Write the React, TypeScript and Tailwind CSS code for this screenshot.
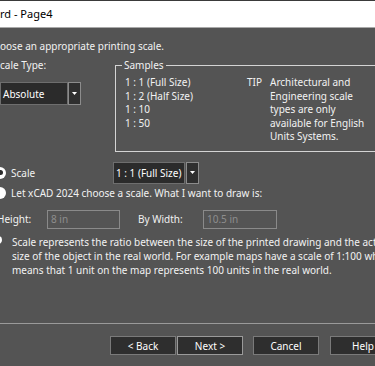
import React from "react";

const Dropdown: React.FC<{ value: string; boxClass: string; gapClass: string }> = ({ value, boxClass, gapClass }) => (
  <div className="flex shrink-0 items-stretch">
    <div className={`${boxClass} flex items-center overflow-hidden whitespace-nowrap border border-[#6e6e6e] bg-[#2b2b2b] pl-[2px] text-white`}>
      {value}
    </div>
    <div className={`${gapClass} flex w-[13px] items-center justify-center border border-[#8c8c8c] bg-[#2f2f2f]`}>
      <svg width="5" height="3" viewBox="0 0 5 3">
        <path d="M0 0h5L2.5 3z" fill="#ffffff" />
      </svg>
    </div>
  </div>
);

const Radio: React.FC<{ checked?: boolean }> = ({ checked }) => (
  <div className="-ml-[6px] flex h-[12px] w-[12px] shrink-0 items-center justify-center rounded-full bg-white">
    {checked && <div className="h-[5px] w-[5px] rounded-full bg-[#2b2b2b]" />}
  </div>
);

const WizButton: React.FC<{ label: string; cls?: string }> = ({ label, cls = "" }) => (
  <button
    type="button"
    className={`${cls} flex h-[19px] w-[66px] shrink-0 items-center justify-center border border-[#7a7a7a] bg-[#2e2e2e] text-white`}
  >
    {label}
  </button>
);

export default function App() {
  return (
    <div className="flex h-[366px] w-[375px] flex-col overflow-hidden bg-[#545454] font-['Noto_Sans',sans-serif] text-[10px] leading-[14px] text-[#f2f2f2]">
      {/* title bar */}
      <div className="flex h-[28px] shrink-0 items-center border-t border-b border-t-[#3a3a3a] border-b-[#a9a9a9] bg-white text-[11px] text-black">
        rd - Page4
      </div>

      <div className="mt-[11px] whitespace-nowrap">oose an appropriate printing scale.</div>

      {/* scale type + samples */}
      <div className="mt-[5px] flex items-start">
        <div className="flex w-[115px] shrink-0 flex-col">
          <div>cale Type:</div>
          <div className="mt-[10px]">
            <Dropdown value="Absolute" boxClass="h-[23px] w-[68px]" gapClass="ml-0" />
          </div>
        </div>

        <fieldset className="w-[290px] shrink-0 border border-[#d4d4d4] pb-[7px] pl-[9px]">
          <legend className="ml-[-3px] px-[2px] leading-[14px]">Samples</legend>
          <div className="mt-[4px] flex leading-[13.5px]">
            <div className="flex w-[122px] shrink-0 flex-col">
              <span>1 : 1 (Full Size)</span>
              <span>1 : 2 (Half Size)</span>
              <span>1 : 10</span>
              <span>1 : 50</span>
            </div>
            <div className="w-[23px] shrink-0">TIP</div>
            <div className="flex flex-col whitespace-nowrap">
              <span>Architectural and</span>
              <span>Engineering scale</span>
              <span>types are only</span>
              <span>available for English</span>
              <span>Units Systems.</span>
            </div>
          </div>
        </fieldset>
      </div>

      {/* scale radio */}
      <div className="mt-[10px] flex h-[22px] items-center">
        <Radio checked />
        <span className="ml-[5px] w-[102px] shrink-0">Scale</span>
        <Dropdown value="1 : 1 (Full Size)" boxClass="h-[22px] w-[72px]" gapClass="ml-[1px]" />
      </div>

      <div className="mt-[2px] flex items-center whitespace-nowrap">
        <Radio />
        <span className="ml-[5px]">Let xCAD 2024 choose a scale. What I want to draw is:</span>
      </div>

      {/* height / width */}
      <div className="mt-[10px] flex items-center">
        <span className="-ml-[3px] w-[50px] shrink-0">Height:</span>
        <div className="flex h-[19px] w-[73px] shrink-0 items-center border border-[#8a8a8a] px-[3px] text-[#8e8e8e]">8 in</div>
        <span className="ml-[18px] w-[65px] shrink-0">By Width:</span>
        <div className="flex h-[19px] w-[74px] shrink-0 items-center border border-[#8a8a8a] px-[3px] text-[#8e8e8e]">10.5 in</div>
      </div>

      {/* note */}
      <div className="mt-[6px] flex items-start">
        <div className="-ml-[6px] mt-[1px] h-[8px] w-[8px] shrink-0 rounded-full bg-white" />
        <div className="ml-[10px] flex flex-col whitespace-nowrap">
          <span>Scale represents the ratio between the size of the printed drawing and the actual</span>
          <span>size of the object in the real world. For example maps have a scale of 1:100 which</span>
          <span>means that 1 unit on the map represents 100 units in the real world.</span>
        </div>
      </div>

      {/* footer */}
      <div className="mt-auto shrink-0 border-t border-[#9a9a9a] pb-[11px] pt-[12px]">
        <div className="flex pl-[110px]">
          <WizButton label="< Back" />
          <WizButton label="Next >" cls="ml-[1px] border-[#9a9a9a]" />
          <WizButton label="Cancel" cls="ml-[10px]" />
          <WizButton label="Help" cls="ml-[11px]" />
        </div>
      </div>
    </div>
  );
}
